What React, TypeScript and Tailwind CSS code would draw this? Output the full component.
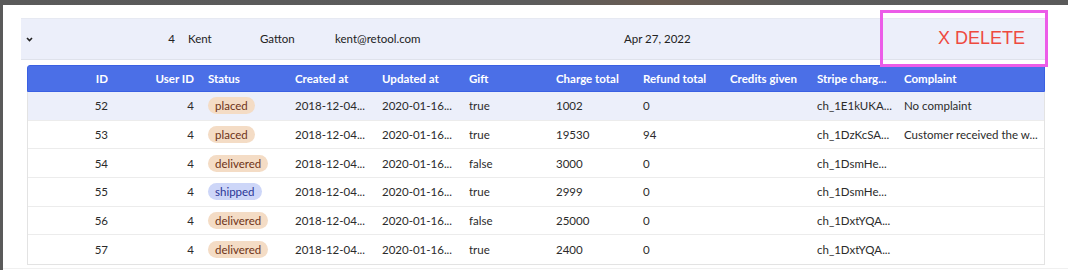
import React from "react";

type Row = {
  id: string;
  status: "placed" | "delivered" | "shipped";
  created: string;
  updated: string;
  gift: string;
  charge: string;
  refund: string;
  stripe: string;
  complaint: string;
};

const rows: Row[] = [
  { id: "52", status: "placed", created: "2018-12-04...", updated: "2020-01-16...", gift: "true", charge: "1002", refund: "0", stripe: "ch_1E1kUKA...", complaint: "No complaint" },
  { id: "53", status: "placed", created: "2018-12-04...", updated: "2020-01-16...", gift: "true", charge: "19530", refund: "94", stripe: "ch_1DzKcSA...", complaint: "Customer received the w..." },
  { id: "54", status: "delivered", created: "2018-12-04...", updated: "2020-01-16...", gift: "false", charge: "3000", refund: "0", stripe: "ch_1DsmHe...", complaint: "" },
  { id: "55", status: "shipped", created: "2018-12-04...", updated: "2020-01-16...", gift: "true", charge: "2999", refund: "0", stripe: "ch_1DsmHe...", complaint: "" },
  { id: "56", status: "delivered", created: "2018-12-04...", updated: "2020-01-16...", gift: "false", charge: "25000", refund: "0", stripe: "ch_1DxtYQA...", complaint: "" },
  { id: "57", status: "delivered", created: "2018-12-04...", updated: "2020-01-16...", gift: "true", charge: "2400", refund: "0", stripe: "ch_1DxtYQA...", complaint: "" },
];

function Pill({ status }: { status: Row["status"] }) {
  if (status === "shipped") {
    return (
      <span className="inline-flex h-[17px] items-center rounded-full bg-[#cdd6f8] px-[7px] text-[#2a3596]">
        shipped
      </span>
    );
  }
  return (
    <span className="inline-flex h-[17px] items-center rounded-full bg-[#f4dcc5] px-[7px] text-[#6e3317]">
      {status}
    </span>
  );
}

const col = "w-[87px] shrink-0 pl-[8px] whitespace-nowrap";

export default function App() {
  return (
    <div
      className="h-[270px] w-[1068px] overflow-hidden bg-[linear-gradient(90deg,#5a5a5a_0%,#5c5c5c_50%,#6a5c52_62%,#5c5c5c_75%,#5a5a5a_100%)] pl-[3px] pt-[5px]"
      style={{ fontFamily: "Lato, Inter, 'Liberation Sans', sans-serif" }}
    >
      <div className="relative h-[265px] w-[1065px] bg-white pl-[18px] pt-[13px]">
        {/* expanded row */}
        <div className="w-[1024px]">
          <div className="flex h-[42px] items-center border-t border-b border-t-[#e6e9f2] border-b-[#dfe2eb] bg-[#eceffa] text-[11.5px] text-[#222]">
            <div className="flex w-[20px] shrink-0 justify-start pl-[5px]">
              <svg width="7" height="5" viewBox="0 0 7 5">
                <path d="M1 1 L3.5 3.5 L6 1" stroke="#222" strokeWidth="1.6" fill="none" />
              </svg>
            </div>
            <div className="w-[134px] shrink-0 text-right">4</div>
            <div className="ml-[13px] w-[72px] shrink-0">Kent</div>
            <div className="w-[75px] shrink-0">Gatton</div>
            <div className="w-[289px] shrink-0">kent@retool.com</div>
            <div className="whitespace-nowrap">Apr 27, 2022</div>
          </div>

          {/* inner table */}
          <div className="ml-[6px] mt-[5px] w-[1018px] border-b border-[#e3e3e3]">
            <div className="flex h-[27px] items-center rounded-tl-[3px] border border-[#3a60e2] bg-[#4b6fe7] text-[11.5px] font-bold text-white">
              <div className="w-[87px] shrink-0 pr-[7px] text-right">ID</div>
              <div className="w-[85px] shrink-0 pr-[6px] text-right">User ID</div>
              <div className={col}>Status</div>
              <div className={col}>Created at</div>
              <div className={col}>Updated at</div>
              <div className={col}>Gift</div>
              <div className={col}>Charge total</div>
              <div className={col}>Refund total</div>
              <div className={col}>Credits given</div>
              <div className={col}>Stripe charg...</div>
              <div className="pl-[8px] whitespace-nowrap">Complaint</div>
            </div>
            <div className="border-l border-r border-[#e3e3e3]">
              {rows.map((r, i) => (
                <div
                  key={r.id}
                  className={
                    "flex h-[28.7px] items-center border-b border-[#ececec] text-[11.5px] text-[#2b2b2b] last:border-b-0 " +
                    (i === 0 ? "bg-[#eceffa]" : "bg-white")
                  }
                >
                  <div className="w-[87px] shrink-0 pr-[7px] text-right">{r.id}</div>
                  <div className="w-[85px] shrink-0 pr-[6px] text-right">4</div>
                  <div className={col}>
                    <Pill status={r.status} />
                  </div>
                  <div className={col}>{r.created}</div>
                  <div className={col}>{r.updated}</div>
                  <div className={col}>{r.gift}</div>
                  <div className={col}>{r.charge}</div>
                  <div className={col}>{r.refund}</div>
                  <div className={col}></div>
                  <div className={col}>{r.stripe}</div>
                  <div className="pl-[8px] whitespace-nowrap">{r.complaint}</div>
                </div>
              ))}
            </div>
          </div>
        </div>
        <div className="ml-[-18px] mt-[3px] h-px w-[1065px] bg-[#f0f0f0]" />

        {/* highlighted delete box */}
        <div className="absolute left-[877px] top-[5px] flex h-[57px] w-[168px] items-center border-[3px] border-[#ec5ce8] pl-[55px]">
          <span
            className="text-[18px] text-[#ee4a3f]"
            style={{ fontFamily: "'Liberation Sans', Arial, sans-serif" }}
          >
            X DELETE
          </span>
        </div>
      </div>
    </div>
  );
}
